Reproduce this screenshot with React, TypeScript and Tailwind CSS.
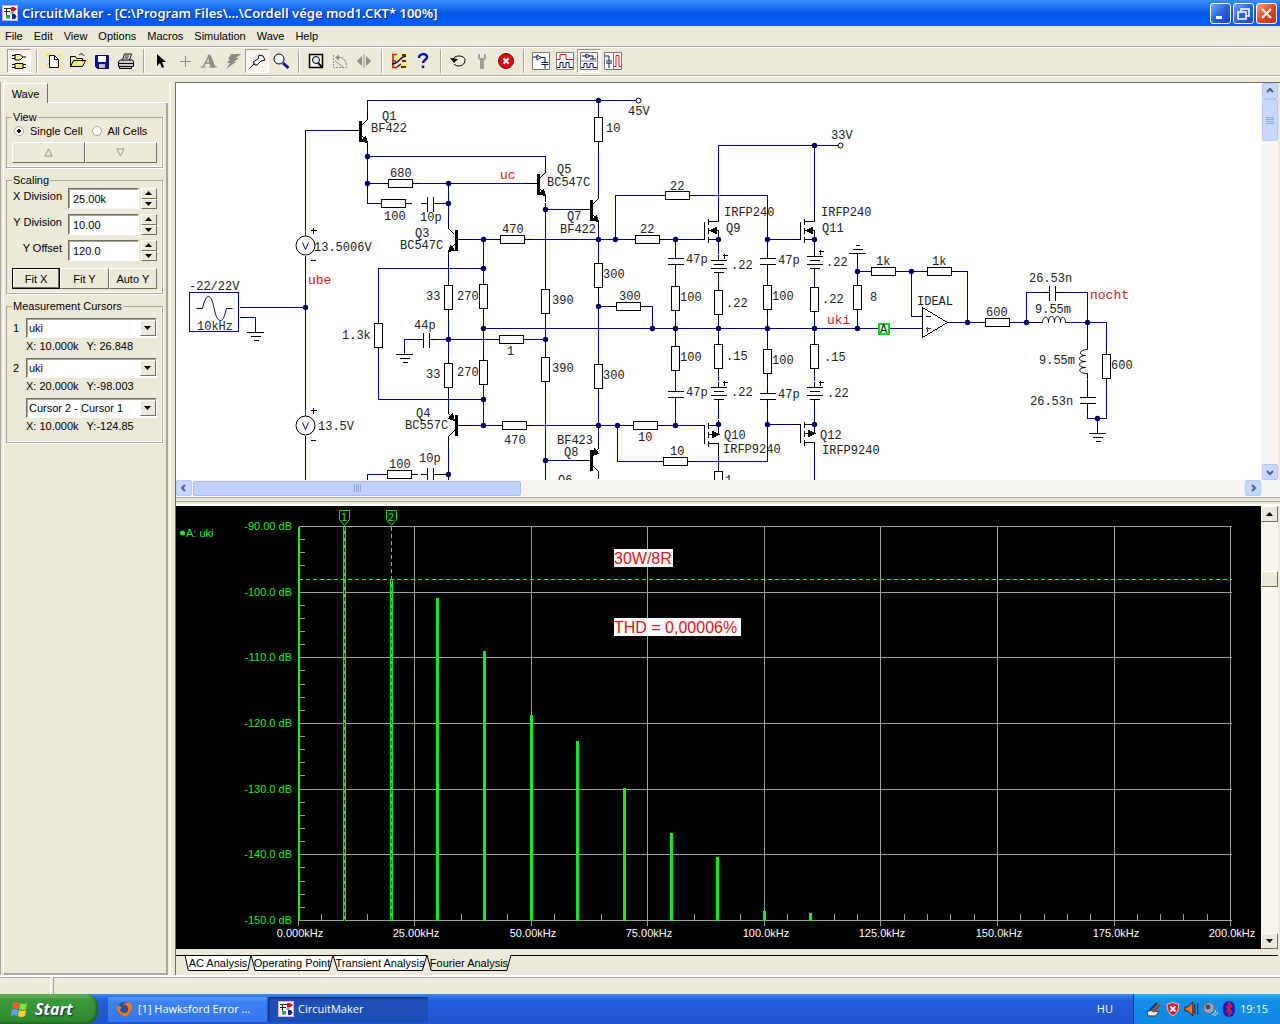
import type { ReactNode } from "react";
import clsx from "clsx";

const menus = ["File", "Edit", "View", "Options", "Macros", "Simulation", "Wave", "Help"];

type Point = [number, number];

// wires of the circuit, as lists of x,y pairs
const wires = [
  "345,130 305,130 305,229", "305,256 305,409", "305,436 305,481", "239,307 305,307",
  "367,112 367,100 635,100", "367,148 367,203 375,203", "367,156 545,156 545,165", "367,183 382,183",
  "418,183 523,183", "438,203 448,203", "448,183 448,221", "470,239 494,239", "530,239 629,239",
  "448,257 448,279", "448,315 448,357", "448,393 448,407", "378,317 378,268 483,268",
  "378,353 378,399 483,399", "483,239 483,278", "483,314 483,354", "483,390 483,425",
  "483,328 922,328", "404,348 404,339 416,339", "436,339 493,339", "529,339 545,339",
  "545,202 545,283", "545,319 545,351", "545,387 545,481", "545,209 577,209", "545,460 577,460",
  "598,100 598,111", "598,147 598,191", "598,227 598,257", "598,293 598,358", "598,394 598,442",
  "598,306 610,306", "646,306 652,306 652,328", "615,239 615,195 659,195", "695,195 767,195 767,251",
  "767,239 791,239", "767,271 767,279", "767,315 767,343", "767,379 767,386",
  "767,406 767,461 693,461", "767,424 791,424", "675,239 675,251", "675,270 675,280", "675,316 675,340",
  "675,376 675,384", "675,404 675,425", "665,239 695,239", "718,212 718,145 837,145", "814,145 814,212",
  "718,245 718,253", "718,278 718,284", "718,320 718,338", "718,374 718,380", "718,404 718,418",
  "718,450 718,465", "814,245 814,250", "814,274 814,281", "814,317 814,338", "814,374 814,380",
  "814,405 814,418", "814,450 814,481", "470,425 496,425", "532,425 627,425", "663,425 695,425",
  "617,425 617,461 657,461", "857,265 857,279", "857,315 857,328", "857,271 865,271", "901,271 921,271",
  "957,271 967,271 967,322", "911,271 911,316 922,316", "952,322 979,322", "1015,322 1036,322",
  "1026,322 1026,292 1042,292", "1061,292 1087,292 1087,343", "1070,322 1106,322 1106,348",
  "1106,384 1106,418 1087,418 1087,409", "1087,379 1087,390", "1097,418 1097,427",
  "448,443 448,481", "367,481 367,474 381,474", "440,474 448,474",
];

const nodes: Point[] = [
  [367, 156], [367, 183], [448, 183], [448, 203], [305, 307], [598, 100], [545, 209], [483, 239],
  [598, 239], [615, 239], [675, 239], [767, 239], [483, 268], [598, 306], [483, 328], [652, 328],
  [675, 328], [718, 328], [767, 328], [814, 328], [857, 328], [448, 339], [545, 339], [483, 399],
  [483, 425], [598, 425], [617, 425], [675, 425], [767, 424], [545, 460], [448, 474], [814, 145],
  [857, 271], [911, 271], [967, 322], [1026, 322], [1087, 322], [1097, 418], [718, 239], [814, 239],
  [718, 424], [814, 424],
];

// left end and centre line of each body
const flatResistors: Point[] = [
  [388, 183], [381, 203], [500, 239], [665, 195], [635, 239], [616, 306], [499, 339], [502, 425],
  [633, 425], [663, 461], [387, 474], [871, 271], [927, 271], [985, 322],
];

// centre line and top end of each body
const uprightResistors: Point[] = [
  [598, 117], [598, 263], [545, 289], [545, 357], [598, 364], [675, 286], [675, 346], [718, 290],
  [718, 344], [448, 285], [448, 363], [483, 284], [483, 360], [378, 323], [767, 285], [767, 349],
  [814, 287], [814, 344], [857, 285], [1106, 354], [718, 471],
];

const flatCapacitors: Point[] = [[427, 203], [423, 339], [427, 474], [1049, 292]];
const uprightCapacitors: Point[] = [[675, 258], [767, 258], [675, 391], [767, 393], [1087, 397]];
const batteries: Point[] = [[718, 260], [814, 256], [718, 387], [814, 387]];
const grounds: Point[] = [[255, 332], [404, 354], [1097, 433]];

const labels: [number, number, string][] = [
  [382, 120, "Q1"], [371, 132, "BF422"], [390, 177, "680"], [384, 220, "100"], [420, 221, "10p"],
  [415, 237, "Q3"], [400, 249, "BC547C"], [314, 251, "13.5006V"], [189, 290, "-22/22V"],
  [197, 330, "10kHz"], [318, 430, "13.5V"], [342, 339, "1.3k"], [414, 329, "44p"], [426, 300, "33"],
  [457, 300, "270"], [426, 378, "33"], [457, 376, "270"], [416, 417, "Q4"], [405, 429, "BC557C"],
  [389, 468, "100"], [419, 462, "10p"], [502, 233, "470"], [557, 173, "Q5"], [547, 186, "BC547C"],
  [567, 220, "Q7"], [560, 233, "BF422"], [606, 132, "10"], [628, 115, "45V"], [670, 190, "22"],
  [640, 233, "22"], [603, 278, "300"], [619, 300, "300"], [552, 304, "390"], [552, 372, "390"],
  [603, 379, "300"], [507, 355, "1"], [504, 444, "470"], [557, 444, "BF423"], [564, 456, "Q8"],
  [558, 484, "Q6"], [638, 441, "10"], [670, 455, "10"], [680, 301, "100"], [680, 361, "100"],
  [686, 263, "47p"], [686, 396, "47p"], [731, 269, ".22"], [726, 307, ".22"], [726, 360, ".15"],
  [731, 396, ".22"], [724, 216, "IRFP240"], [726, 232, "Q9"], [724, 439, "Q10"],
  [723, 453, "IRFP9240"], [725, 484, "1"], [831, 139, "33V"], [821, 216, "IRFP240"],
  [822, 232, "Q11"], [778, 264, "47p"], [826, 266, ".22"], [772, 300, "100"], [772, 364, "100"],
  [822, 303, ".22"], [824, 361, ".15"], [778, 398, "47p"], [827, 397, ".22"], [820, 439, "Q12"],
  [822, 454, "IRFP9240"], [876, 265, "1k"], [932, 265, "1k"], [870, 301, "8"], [917, 305, "IDEAL"],
  [986, 316, "600"], [1029, 282, "26.53n"], [1035, 313, "9.55m"], [1039, 364, "9.55m"],
  [1030, 405, "26.53n"], [1111, 369, "600"],
];

const netNames: [number, number, string][] = [
  [500, 179, "uc"], [308, 284, "ube"], [827, 324, "uki"], [1090, 299, "nocht"],
];

function Transistor({ x, y, flip = false, pnp = false }: { x: number; y: number; flip?: boolean; pnp?: boolean }) {
  return (
    <g transform={`translate(${x} ${y}) scale(${flip ? -1 : 1} ${pnp ? -1 : 1})`}>
      <path d="M-13 0H0M3 -5L9 -11V-18M3 5L9 12V18" />
      <path d="M0 -10h3v21h-3z" fill="black" stroke="none" />
      {pnp ? (
        <path d="M3 5l6 2l-4 5z" fill="black" />
      ) : (
        <path d="M9 12l-6 -1l4 -5z" fill="black" />
      )}
    </g>
  );
}

function Mosfet({ x, y, pChannel = false }: { x: number; y: number; pChannel?: boolean }) {
  return (
    <g transform={`translate(${x} ${y}) scale(1 ${pChannel ? -1 : 1})`}>
      <path d="M-23 0h9v-18M-10 3v-6M-10 -6v-6M-10 -15v-6M-10 -18h10v-10M-10 -9h10V6M-10 0h10" />
      <path d={pChannel ? "M0 -9l-6 -3v6z" : "M-9 -9l7 -3v6z"} fill="black" />
    </g>
  );
}

function Voltmeter({ x, y }: { x: number; y: number }) {
  return (
    <g>
      <path d={`M${x} ${y - 16}v6`} stroke="#c00000" />
      <path d={`M${x + 5} ${y - 15}h6M${x + 8} ${y - 18}v6M${x + 5} ${y + 15}h5M${x} ${y + 10}v6`} />
      <circle cx={x} cy={y} r={9.5} fill="white" shapeRendering="auto" />
      <path d={`M${x - 3} ${y - 3}l3 7l3 -7`} stroke="#000080" shapeRendering="auto" />
    </g>
  );
}

function Schematic() {
  return (
    <svg
      className="block h-[397px] w-[1085px] bg-white font-['Liberation_Mono',monospace] text-xs"
      viewBox="176 83 1085 397"
      role="img"
      aria-label="Amplifier circuit"
    >
      <g transform="translate(0.5 0.5)" fill="none" stroke="black" shapeRendering="crispEdges">
        {wires.map((points) => (
          <polyline key={points} points={points} stroke="#000090" />
        ))}

        {flatResistors.map(([x, y]) => (
          <g key={`${x}-${y}`}>
            <path d={`M${x - 6} ${y}h36`} />
            <rect x={x} y={y - 4} width={24} height={8} fill="white" />
          </g>
        ))}
        {uprightResistors.map(([x, y]) => (
          <g key={`${x}-${y}`}>
            <path d={`M${x} ${y - 6}v36`} />
            <rect x={x - 4} y={y} width={8} height={24} fill="white" />
          </g>
        ))}
        {flatCapacitors.map(([x, y]) => (
          <path key={`${x}-${y}`} d={`M${x - 7} ${y}h7M${x} ${y - 7}v15M${x + 6} ${y - 7}v15M${x + 6} ${y}h7`} />
        ))}
        {uprightCapacitors.map(([x, y]) => (
          <path key={`${x}-${y}`} d={`M${x} ${y - 7}v7M${x - 8} ${y}h16M${x - 8} ${y + 6}h16M${x} ${y + 6}v7`} />
        ))}
        {batteries.map(([x, y]) => (
          <path
            key={`${x}-${y}`}
            d={`M${x} ${y - 6}v6M${x - 8} ${y}h16M${x - 5} ${y + 4}h10M${x - 8} ${y + 8}h16M${x - 5} ${y + 12}h10M${x} ${y + 12}v6M${x + 4} ${y - 5}h5M${x + 6} ${y - 7}v5`}
          />
        ))}
        {grounds.map(([x, y]) => (
          <path key={`${x}-${y}`} d={`M${x} ${y - 6}v6M${x - 9} ${y}h17M${x - 5} ${y + 4}h10M${x - 2} ${y + 8}h5`} />
        ))}
        <path d="M857 265V253M848 253h17M852 249h10M855 245h4" />

        <Transistor x={358} y={130} />
        <Transistor x={536} y={183} />
        <Transistor x={589} y={209} />
        <Transistor x={457} y={239} flip />
        <Transistor x={457} y={425} flip pnp />
        <Transistor x={589} y={460} pnp />
        <Mosfet x={718} y={239} />
        <Mosfet x={814} y={239} />
        <Mosfet x={718} y={425} pChannel />
        <Mosfet x={814} y={424} pChannel />
        <Voltmeter x={305} y={245} />
        <Voltmeter x={305} y={425} />

        {/* signal source */}
        <rect x={189} y={292} width={49} height={39} stroke="#000090" />
        <path
          d="M196 308h6c2 -9 4 -12 6 -12c6 0 5 24 12 24c3 0 4 -5 6 -12h6"
          stroke="#000090"
          shapeRendering="auto"
        />
        <path d="M239 317h6" />
        <path d="M245 317h10v10" stroke="#000090" />

        {/* op amp and output filter */}
        <path d="M922 307L947 322L922 337Z" fill="white" />
        <path d="M946 322h6" />
        <path d="M925 316h5" stroke="#000090" />
        <path d="M925 328h5M927 326v5" stroke="#e00000" />
        <path d="M1036 322h6c0 -6 6 -8 6 0c0 -8 6 -8 6 0c0 -8 6 -8 6 0c0 -8 5 -6 5 0h5" shapeRendering="auto" />
        <path d="M1087 343v6c-8 0 -10 6 -2 6c-8 0 -8 6 0 6c-8 0 -8 6 0 6c-8 0 -8 6 2 6v6" shapeRendering="auto" />
        <circle cx={638} cy={100} r={2.5} fill="white" shapeRendering="auto" />
        <circle cx={840} cy={145} r={2.5} fill="white" shapeRendering="auto" />

        <g fill="#000060" stroke="none" shapeRendering="auto">
          {nodes.map(([x, y]) => (
            <circle key={`${x}-${y}`} cx={x} cy={y} r={2.7} />
          ))}
        </g>
        <rect x={878} y={323} width={10} height={10} fill="#e0ffe0" stroke="#00d820" strokeWidth={2} />
      </g>

      <g fill="#202020">
        {labels.map(([x, y, text]) => (
          <text key={`${x}-${y}`} x={x} y={y}>{text}</text>
        ))}
        <text x={880} y={333}>A</text>
      </g>
      <g fill="#d01818" fontSize={13}>
        {netNames.map(([x, y, text]) => (
          <text key={text} x={x} y={y}>{text}</text>
        ))}
      </g>
    </svg>
  );
}

// [kHz, top edge of the bar]
const harmonics: Point[] = [
  [10, 526], [20, 579], [30, 597], [40, 650], [50, 714], [60, 740], [70, 787], [80, 832], [90, 856],
  [100, 910], [110, 912],
];

const levels = ["-90.00 dB", "-100.0 dB", "-110.0 dB", "-120.0 dB", "-130.0 dB", "-140.0 dB", "-150.0 dB"];
const frequencies = [
  "0.000kHz", "25.00kHz", "50.00kHz", "75.00kHz", "100.0kHz", "125.0kHz", "150.0kHz", "175.0kHz", "200.0kHz",
];

const freqToX = (khz: number) => Math.floor(298 + khz * 4.663);
const levelToY = (step: number) => Math.round(526 + step * 13.13);

function Spectrum() {
  return (
    <svg
      className="block h-auto w-full font-['Liberation_Sans',Arial,sans-serif] text-[11px]"
      viewBox="176 506 1085 443"
      role="img"
      aria-label="Fourier analysis of uki"
    >
      <g transform="translate(0.5 0.5)" stroke="#a0a0a0" shapeRendering="crispEdges" fill="none">
        {levels.map((level, i) => (
          <path key={level} d={`M298 ${levelToY(i * 5)}H1231`} />
        ))}
        {frequencies.map((freq, i) => (
          <path key={freq} d={`M${freqToX(i * 25)} 526V925`} />
        ))}
        {/* the cursor line takes the place of the tick at its level */}
        {Array.from({ length: 30 }, (_, i) => i !== 4 && (
          <path key={i} d={`M298 ${levelToY(i)}h6`} />
        ))}
        {Array.from({ length: 40 }, (_, i) => (
          <path key={i} d={`M${freqToX(i * 5)} 913v7`} />
        ))}
        <path d="M298 526V920" stroke="#20ee20" strokeWidth={2} />
        {harmonics.map(([khz, top]) => (
          <path key={khz} d={`M${freqToX(khz)} ${top}V920`} stroke="#10ee20" strokeWidth={3} />
        ))}
        <path d="M344 526V920M391 579V920" stroke="#064a08" strokeDasharray="4 3" />
        <path d="M391 526V579M298 579H1231" stroke="#10ff20" strokeDasharray="4 3" />
        <g stroke="#20e020" shapeRendering="auto">
          <path d="M339 510h10v9l-5 6l-5 -6z" />
          <path d="M386 510h10v9l-5 6l-5 -6z" />
        </g>
      </g>
      <g fill="#20ee20">
        <text x={341} y={521}>1</text>
        <text x={388} y={521}>2</text>
        <circle cx={182.5} cy={533} r={2.5} />
        <text x={186} y={537}>A: uki</text>
        {levels.map((level, i) => (
          <text key={level} x={292} y={levelToY(i * 5) + 4} textAnchor="end">{level}</text>
        ))}
      </g>
      <g fill="white">
        {frequencies.map((freq, i) => (
          <text key={freq} x={freqToX(i * 25) + 2} y={937} textAnchor="middle">{freq}</text>
        ))}
        <rect x={614} y={549} width={59} height={18} />
        <rect x={614} y={618} width={127} height={18} />
      </g>
      <g fill="#e01010" fontSize={16}>
        <text x={614} y={564}>30W/8R</text>
        <text x={614} y={633}>THD = 0,00006%</text>
      </g>
    </svg>
  );
}

function AppIcon() {
  return (
    <svg className="size-4 shrink-0" viewBox="0 0 16 16" fill="none">
      <path d="M0 0h16v16H0z" fill="#fff" />
      <path d="M.5 .5h15v15H.5z" stroke="#e8a8d8" />
      <path d="M2 3.500h7M4.500 3.500v8h3M2 6.500h6M8.500 8h3" stroke="#222" />
      <path d="M9 2h3l3 2-3 2.500H9z" fill="#d01020" />
      <path d="M4 10h4v3.500H4z" fill="#20a040" />
      <path d="M10 9h3l1.500 2.500L13 14h-3z" fill="#1020a0" />
    </svg>
  );
}

type Tool = { name: string; icon: ReactNode; pressed?: boolean };

const tools: (Tool | null)[] = [
  { name: "Parts", pressed: true, icon: <><path d="M5 2.500h5l3 2.500-3 3H5zM5 11.500h8v5H5zM2 3.500h3M2 6.500h3M13 5h3M2 12.500h3M2 15.500h3M13 12.500h3M13 15.500h3" fill="#f4f080" /></> },
  null,
  { name: "New", icon: <><path d="M1 3l3 2M3 1l2 3M14 4l3-2M1 14l3-2M14 13l3 2" stroke="#f0e830" strokeWidth="2" /><path d="M4.500 3.500h5l4 4v8h-9zM9.500 3.500v4h4" fill="white" /></> },
  { name: "Open", icon: <><path d="M1.500 14.500v-10h5l1 2h6v3M1.500 14.500l3-6h12l-3 6z" fill="#f4f080" /><path d="M10 3c2-2 4-1 5 1" /></> },
  { name: "Save", icon: <><path d="M2.500 3.500h13v13h-11l-2-2z" fill="#101090" stroke="#101050" /><path d="M5 4h8v6H5z" fill="white" stroke="none" /><path d="M6 12h6v4H6z" fill="#c0c0c0" stroke="none" /></> },
  { name: "Print", icon: <><path d="M5.500 8l2-6h7l-2 6M8 4h4M7.500 6h4" fill="white" /><path d="M1.500 9.500l2-1.500h12l1 1.500v5h-15zM1.500 11.500h15M2.500 14.500v2h12v-2" fill="#c8c8c0" /></> },
  null,
  { name: "Select", icon: <path d="M5 2v12l3-3 2 5 2-1-2-5h4z" fill="black" stroke="none" /> },
  { name: "Wire", icon: <path d="M9.500 4v11M4 9.500h11" stroke="#8c8c84" /> },
  { name: "Text", icon: <><path d="M3 15L9 4M5 11h7" stroke="#8c8c84" strokeWidth="1.500" /><path d="M8 3h2l5 12h-4zM0.500 15h5M9 15h8" fill="#8c8c84" stroke="#8c8c84" /></> },
  { name: "Delete", icon: <path d="M7 2h10l-5 4h3l-5 4h2L2 17l4-6H3l3-4H4z" fill="#8c8c84" stroke="none" /> },
  { name: "Probe", pressed: true, icon: <path d="M1.500 16.500l5-5M5 10l5-3 1-4 4 1 2 4-4 1-4 4-2 0z" fill="white" /> },
  { name: "Zoom", icon: <><circle cx="7" cy="7" r="5" fill="#f8fbff" /><path d="M11 11l5.500 5" stroke="#101090" strokeWidth="3" /></> },
  null,
  { name: "Fit", icon: <><path d="M2.500 2.500h13v13h-13z" fill="#f4f4ec" strokeWidth="1.500" /><circle cx="9" cy="8" r="3.500" fill="#d8ecec" /><path d="M11 11l4 4" strokeWidth="2" /></> },
  { name: "Rotate", icon: <><path d="M2.500 3v12.500h14" stroke="#8c8c84" strokeDasharray="2 1" /><path d="M6 5.500h3c4 0 6 4 6.500 8M4 9l8 6" stroke="#8c8c84" /><path d="M4 5.500l4-3v6z" fill="#8c8c84" stroke="none" /></> },
  { name: "Mirror", icon: <><path d="M9 2v14" stroke="#8c8c84" /><path d="M7 4v10L2 9zM11 4v10l5-5z" fill="#8c8c84" stroke="none" /></> },
  null,
  { name: "Trace", icon: <><path d="M1 1h16v16H1z" fill="#f8f090" stroke="none" /><path d="M2 2.500h5M2 9h4M2 15.500h5M3 2v14" stroke="#c02020" strokeWidth="1.500" /><path d="M2 12c7 0 7-7 14-8M7 15l4-3" stroke="#101090" strokeWidth="1.500" /><path d="M12 9h4M12 3h4M11 15h5" stroke="#802010" strokeWidth="2" /></> },
  { name: "Help", icon: <path d="M5 6c0-5 8-5 8-1 0 3-4 3-4 6M9 13.500v2.500" stroke="#1010a0" strokeWidth="2.500" /> },
  null,
  { name: "Reset", icon: <><path d="M4 8c1-6 13-5 12 1-1 6-9 6-11 3" /><path d="M1 6l4 5 4-4z" fill="black" stroke="none" /></> },
  { name: "Options", icon: <path d="M5 2v4l2 3v8h4V9l2-3V2l-2 0v4H7V2z" fill="#a0a098" stroke="none" /> },
  { name: "Stop", icon: <><circle cx="9" cy="9" r="7.500" fill="#e00810" stroke="#701010" /><path d="M6.500 6.500l5 5M11.500 6.500l-5 5" stroke="white" strokeWidth="2" /></> },
  null,
  { name: "Schematic", icon: <><path d="M.5 .5h17v17H.5z" fill="white" stroke="#777" /><path d="M1 5h4M5 3v5l4-2.500zM9 5.500h4v5M9.500 10.500h7M9.500 12.500h7M13 12.500v4" stroke="#101050" /></> },
  { name: "Waveforms", icon: <><path d="M.5 .5h17v17H.5z" fill="white" stroke="#777" /><path d="M1 7.500h3v-5h6v5h7" stroke="#e01010" /><path d="M1 15.500h3v-5h3v5h3v-5h3v5h4" stroke="#101050" /></> },
  { name: "Split horizontally", pressed: true, icon: <><path d="M.5 .5h17v17H.5zM.5 9h17" fill="white" stroke="#777" /><path d="M2 4h4M6 2v4l4-2zM10 4h3v3M10 7h6M1 15.500h3v-4h3v4h3v-4h3v4h4" stroke="#101050" /></> },
  { name: "Split vertically", icon: <><path d="M.5 .5h17v17H.5zM9.500 .5v17" fill="white" stroke="#777" /><path d="M1 4h4v5M2 9h6M2 11h6M5 11v5" stroke="#101050" /><path d="M10 14.500h2v-11h3v11h2" stroke="#e01010" /></> },
];

function Toolbar() {
  return (
    <div className="mb-1.5 flex h-[30px] items-center border-y border-[#aca899] pl-[7px] shadow-[inset_0_1px_0_white,0_1px_0_white]">
      {tools.map((tool, i) =>
        tool ? (
          <button
            key={tool.name}
            aria-label={tool.name}
            className={clsx(
              "flex h-6 w-6 shrink-0 items-center justify-center",
              tool.pressed && "border border-t-[#9d9a8c] border-l-[#9d9a8c] border-r-white border-b-white bg-[#f6f4ec]",
            )}
          >
            <svg className="size-[18px] shrink-0" viewBox="0 0 18 18" fill="none" stroke="black">
              {tool.icon}
            </svg>
          </button>
        ) : (
          <span key={i} className="flex h-6 w-[11px] shrink-0 justify-center">
            <span className="w-0.5 border-l border-[#aca899] bg-white" />
          </span>
        ),
      )}
    </div>
  );
}

const raised = "border border-t-white border-l-white border-r-[#716f64] border-b-[#716f64] bg-[#ece9d8]";
const sunken = "border border-t-[#716f64] border-l-[#716f64] border-r-white border-b-white bg-white shadow-[inset_1px_1px_0_#aca899]";

function Triangle({ down = false }: { down?: boolean }) {
  return (
    <svg className="h-1 w-2" viewBox="0 0 8 4">
      <path d={down ? "M0 0h7L3.500 4z" : "M0 4h7L3.500 0z"} fill="black" />
    </svg>
  );
}

function Group({ title, children }: { title: string; children: ReactNode }) {
  return (
    <fieldset className="mb-1.5 border border-[#aca899] px-[5px] pb-1 shadow-[inset_-1px_-1px_0_white,1px_1px_0_white]">
      <legend className="px-px leading-3">{title}</legend>
      {children}
    </fieldset>
  );
}

function ScaleField({ id, label, value }: { id: string; label: string; value: string }) {
  return (
    <div className="mb-[5px] flex h-[21px] justify-end">
      <label htmlFor={id} className="mr-1.5 whitespace-nowrap">{label}</label>
      <input id={id} defaultValue={value} className={clsx("h-[21px] w-[71px] px-1 outline-none", sunken)} />
      <span className="ml-0.5 flex h-[21px] w-4 flex-col">
        <button aria-label={`${label} up`} className={clsx("flex flex-1 items-center justify-center", raised)}><Triangle /></button>
        <button aria-label={`${label} down`} className={clsx("flex flex-1 items-center justify-center", raised)}><Triangle down /></button>
      </span>
    </div>
  );
}

function CursorField({ id, label, value, x, y }: { id: string; label: string; value: string; x: string; y: string }) {
  return (
    <div className="mb-1">
      <div className="flex h-5 items-center">
        <label htmlFor={id} className="w-3.5 pl-px">{label}</label>
        <span className="relative h-5 flex-1">
          <select id={id} aria-label={label ? undefined : "Difference"} className={clsx("h-5 w-full appearance-none px-0.5 outline-none", sunken)}>
            <option>{value}</option>
          </select>
          <span className={clsx("pointer-events-none absolute top-0.5 right-px flex h-4 w-4 items-center justify-center", raised)}>
            <Triangle down />
          </span>
        </span>
      </div>
      <p className="flex h-4 items-center gap-2 pl-3.5 whitespace-pre">
        <span>X: {x}</span>
        <span>Y:{y}</span>
      </p>
    </div>
  );
}

function WavePanel() {
  return (
    <aside className="flex w-[169px] shrink-0 flex-col border-l border-[#aca899] pt-px pr-px pl-0.5">
      <div className="flex h-5">
        <button className="h-5 w-[45px] border-t border-l border-white border-r border-r-[#716f64] text-[11px]">Wave</button>
        <span className="flex-1 border-b border-white" />
      </div>
      <div className="flex-1 border-r-2 border-b-2 border-l border-[#aca899] border-l-white pt-[8px] pr-[3px] pl-0.5">
        <Group title="View">
          <div className="flex h-4 items-center gap-[9px] pl-0.5">
            {["Single Cell", "All Cells"].map((name, i) => (
              <label key={name} className="flex items-center gap-1.5 whitespace-nowrap">
                <input
                  type="radio"
                  name="cells"
                  defaultChecked={i === 0}
                  className="size-[10px] appearance-none rounded-full border border-[#aca899] bg-white checked:bg-[radial-gradient(black_2px,white_2px)]"
                />
                {name}
              </label>
            ))}
          </div>
          <div className="mt-[3px] flex h-[21px]">
            <button aria-label="Previous cell" className={clsx("flex flex-1 items-center justify-center", raised)}>
              <svg className="size-[9px]" viewBox="0 0 10 10" fill="none" stroke="#8a887a"><path d="M5 1l4 8H1z" /></svg>
            </button>
            <button aria-label="Next cell" className={clsx("flex flex-1 items-center justify-center", raised)}>
              <svg className="size-[9px]" viewBox="0 0 10 10" fill="none" stroke="#8a887a"><path d="M5 9l4-8H1z" /></svg>
            </button>
          </div>
        </Group>
        <Group title="Scaling">
          <div className="pt-0.5">
            <ScaleField id="x-division" label="X Division" value="25.00k" />
            <ScaleField id="y-division" label="Y Division" value="10.00" />
            <ScaleField id="y-offset" label="Y Offset" value="120.0" />
          </div>
          <div className="mt-[7px] flex h-[21px]">
            <button className="flex-1 border border-black shadow-[inset_-1px_-1px_0_#716f64,inset_1px_1px_0_white]">Fit X</button>
            <button className={clsx("flex-1", raised)}>Fit Y</button>
            <button className={clsx("flex-1", raised)}>Auto Y</button>
          </div>
        </Group>
        <Group title="Measurement Cursors">
          <div className="pt-1.5">
            <CursorField id="cursor-1" label="1" value="uki" x="10.000k" y=" 26.848" />
            <CursorField id="cursor-2" label="2" value="uki" x="20.000k" y="-98.003" />
            <CursorField id="difference" label="" value="Cursor 2 - Cursor 1" x="10.000k" y="-124.85" />
          </div>
        </Group>
      </div>
    </aside>
  );
}

const chevrons = {
  up: "M2 6l3-3 3 3",
  down: "M2 4l3 3 3-3",
  left: "M6 2L3 5l3 3",
  right: "M4 2l3 3-3 3",
};

function ScrollArrow({ to }: { to: keyof typeof chevrons }) {
  return (
    <button aria-label={`Scroll ${to}`} className="flex size-4 shrink-0 items-center justify-center rounded-xs border border-[#b4c8f6] bg-[#c8d8fc]">
      <svg className="size-[10px]" viewBox="0 0 10 10" fill="none" stroke="#4d6185" strokeWidth="2">
        <path d={chevrons[to]} />
      </svg>
    </button>
  );
}

const analyses = ["AC Analysis", "Operating Point", "Transient Analysis", "Fourier Analysis"];
const tabWidths = ["w-[66px]", "w-[82px]", "w-[94px]", "w-[84px]"];

function AnalysisTabs() {
  return (
    <div className="flex h-[26px] shrink-0 pt-1.5">
      <span className="w-[9px] border-t border-black" />
      {analyses.map((name, i) => {
        const active = i === 3;
        return (
          <button key={name} className="relative h-4 shrink-0">
            <svg className="absolute inset-0 h-4 w-full overflow-visible" viewBox="0 0 100 16" preserveAspectRatio="none">
              <path
                d="M0 0L5 15.500H95L100 0"
                fill={active ? "#ece9d8" : "white"}
                stroke="black"
                vectorEffect="non-scaling-stroke"
              />
              {!active && <path d="M0 .5H100" stroke="black" vectorEffect="non-scaling-stroke" />}
            </svg>
            <span className={clsx("relative flex h-4 items-center justify-center whitespace-nowrap", tabWidths[i])}>{name}</span>
          </button>
        );
      })}
      <span className="mr-0.5 flex-1 border-t border-black" />
    </div>
  );
}

function Workspace() {
  return (
    <main className="flex min-w-0 flex-1 flex-col border-t border-l border-[#716f64]">
      <section className="flex pr-0.5">
        <div className="min-w-0 flex-1 overflow-hidden">
          <Schematic />
        </div>
        <div className="flex w-[17px] shrink-0 flex-col items-end bg-[#f5f4ee]">
          <ScrollArrow to="up" />
          <span className="flex h-[42px] w-4 flex-col items-center justify-center gap-px rounded-xs border border-[#b4c8f6] bg-[#c8d8fc]">
            {[0, 1, 2, 3].map((i) => <span key={i} className="h-px w-2 bg-[#8ca6e0]" />)}
          </span>
          <span className="flex-1" />
          <ScrollArrow to="down" />
        </div>
      </section>
      <div className="flex h-[17px] shrink-0 items-center gap-px border-b border-white bg-[#f5f4ee] pr-[19px]">
        <ScrollArrow to="left" />
        <span className="flex h-[15px] w-[328px] items-center justify-center gap-px rounded-xs border border-[#a8bcf0] bg-[#bfd0fa]">
          {[0, 1, 2, 3].map((i) => <span key={i} className="h-2 w-px bg-[#8ca6e0]" />)}
        </span>
        <span className="flex-1" />
        <ScrollArrow to="right" />
      </div>
      <div className="h-[9px] shrink-0 border-t border-b-2 border-t-[#aca899] border-b-white pt-[3px]">
        <div className="border-t border-[#aca899]" />
      </div>
      <section className="flex flex-1 pr-0.5">
        <div className="min-w-0 flex-1 bg-black">
          <Spectrum />
        </div>
        <div className="flex w-[17px] shrink-0 flex-col bg-[#f6f4ec]">
          <button aria-label="Scroll up" className={clsx("flex h-4 items-center justify-center", raised)}><Triangle /></button>
          <span className="flex-1" />
          <span className={clsx("h-4", raised)} />
          <span className="flex-[7]" />
          <button aria-label="Scroll down" className={clsx("flex h-4 items-center justify-center", raised)}><Triangle down /></button>
        </div>
      </section>
      <AnalysisTabs />
    </main>
  );
}

function WindowButton({ name, close = false, children }: { name: string; close?: boolean; children: ReactNode }) {
  return (
    <button
      aria-label={name}
      className={clsx(
        "flex size-[21px] items-center justify-center rounded-[3px] border border-white",
        close ? "bg-linear-to-br from-[#f0a080] via-[#e04820] to-[#c03010]" : "bg-linear-to-br from-[#7ca4f8] via-[#2c60e0] to-[#1848c8]",
      )}
    >
      <svg className="size-[15px]" viewBox="0 0 15 15" fill="none" stroke="white" strokeWidth="2">{children}</svg>
    </button>
  );
}

function TitleBar() {
  return (
    <header className="flex h-[26px] items-center bg-linear-to-b from-[#3a90fc] via-[#0456e8] to-[#0360f8] pr-[3px] pl-0.5">
      <AppIcon />
      <h1 className="ml-1 flex-1 truncate font-['Noto_Sans',sans-serif] text-[13px] font-semibold text-white [text-shadow:1px_1px_#0a2880]">
        CircuitMaker - [C:\Program Files\...\Cordell vége mod1.CKT* 100%]
      </h1>
      <div className="flex gap-0.5">
        <WindowButton name="Minimize"><path d="M3 11.500h6" strokeWidth="3" /></WindowButton>
        <WindowButton name="Restore"><path d="M5 5V3h8v7h-3M2 6h8v7H2z" strokeWidth="1.500" /></WindowButton>
        <WindowButton name="Close" close><path d="M3 3l9 9M12 3l-9 9" /></WindowButton>
      </div>
    </header>
  );
}

function Taskbar() {
  return (
    <footer className="flex h-[30px] items-stretch bg-linear-to-b from-[#3f8cf3] via-[#245edb] via-20% to-[#1f55cf] text-white">
      <button className="flex w-[98px] items-center gap-1.5 rounded-r-xl bg-linear-to-b from-[#6cb868] via-[#3c9a3c] via-20% to-[#2f8530] pl-2.5 shadow-[inset_-2px_-1px_3px_#1c5c1c]">
        <svg className="size-[19px]" viewBox="0 0 19 19">
          <path d="M3 3q3-2 6 0L8 9q-3-2-6 0z" fill="#f06030" />
          <path d="M10 3q4 2 7 0l-1 6q-3 2-7 0z" fill="#90d840" />
          <path d="M2 10q3-2 6 0l-1 6q-3-2-6 0z" fill="#60a0f8" />
          <path d="M9 10q3 2 7 0l-1 6q-4 2-7 0z" fill="#fcd030" />
        </svg>
        <span className="font-['Open_Sans',sans-serif] text-base font-bold italic [text-shadow:1px_1px_2px_#123]">Start</span>
      </button>
      <nav className="flex flex-1 items-center pl-2.5 font-['Open_Sans',sans-serif]">
        <button className="flex h-[25px] w-[159px] items-center gap-1.5 rounded-xs bg-linear-to-b from-[#5a9cfc] via-[#3c80f0] via-20% to-[#3878ec] px-2">
          <svg className="size-4 shrink-0" viewBox="0 0 16 16">
            <circle cx="8" cy="8" r="7" fill="#2850a0" />
            <path d="M7 4q4-1 5 3t-3 5q-5 0-5-4l2-1q-2-2-4-3-2 4 0 7t6 4 7-5-2-9l-1 1q-2-1-5 2z" fill="#f07818" />
          </svg>
          <span className="whitespace-nowrap">[1] Hawksford Error ...</span>
        </button>
        <button className="ml-px flex h-[25px] w-[160px] items-center gap-1 rounded-xs bg-[#1c4eb4] px-2.5 shadow-[inset_1px_1px_2px_#10307c]">
          <AppIcon />
          <span>CircuitMaker</span>
        </button>
        <span className="mr-5 ml-auto">HU</span>
      </nav>
      <div className="flex w-[147px] items-center gap-[3px] border-l border-[#0a3c9c] bg-linear-to-b from-[#30b0f8] via-[#1290e8] via-20% to-[#0f88e0] px-3 font-['Open_Sans',sans-serif]">
        <svg className="size-4" viewBox="0 0 16 16">
          <path d="M1 11l4-2 8 2-3 4H2z" fill="#e8e8e8" stroke="#333" />
          <path d="M5 10l8-8" stroke="#20a030" strokeWidth="3" />
          <path d="M7 11l7-7" stroke="#e02020" strokeWidth="2" />
          <path d="M4 9l7-7" stroke="#1020c0" strokeWidth="2" />
        </svg>
        <svg className="size-4" viewBox="0 0 16 16">
          <path d="M2 3q4 0 6-2 2 2 6 2 0 9-6 12-6-3-6-12z" fill="#d81828" stroke="#f8c8c8" />
          <path d="M5.500 5.500l5 5M10.500 5.500l-5 5" stroke="white" strokeWidth="2" />
        </svg>
        <svg className="size-4" viewBox="0 0 16 16">
          <path d="M1 6h3l5-5v14l-5-5H1z" fill="#f07030" stroke="#401008" />
          <path d="M11 3v10M14 2v12" stroke="#202020" fill="none" />
        </svg>
        <svg className="size-4" viewBox="0 0 16 16">
          <circle cx="7" cy="7" r="5.500" fill="#a0a8b0" stroke="#606870" />
          <circle cx="6" cy="6" r="2.500" fill="#404850" />
          <path d="M10 14q4-1 4-5M12 15q3-1 4-4" stroke="#c0dcf8" fill="none" />
        </svg>
        <svg className="size-4" viewBox="0 0 16 16">
          <rect x="2" y="0" width="12" height="16" rx="6" fill="#1020c0" />
          <path d="M5 5l6 6-3 3V2l3 3-6 6" stroke="#e02030" strokeWidth="1.500" fill="none" />
        </svg>
        <time className="ml-auto">19:15</time>
      </div>
    </footer>
  );
}

export default function App() {
  return (
    <div className="flex min-h-screen w-full flex-col bg-[#ece9d8] font-['Liberation_Sans',Arial,sans-serif] text-[11px] leading-4 text-black">
      <TitleBar />
      <nav className="flex h-5 items-center gap-[11px] pl-[5px]">
        {menus.map((menu) => (
          <button key={menu}>{menu}</button>
        ))}
      </nav>
      <Toolbar />
      <div className="flex flex-1">
        <WavePanel />
        <div className="w-1.5 shrink-0 border-l-2 border-white" />
        <Workspace />
      </div>
      <div className="flex h-[19px] shrink-0 gap-0.5 border-t-2 border-white">
        <span className="w-[51px] border-t border-r border-[#aca899] border-r-white" />
        <span className="flex-1 border-t border-l border-[#aca899]" />
      </div>
      <Taskbar />
    </div>
  );
}
